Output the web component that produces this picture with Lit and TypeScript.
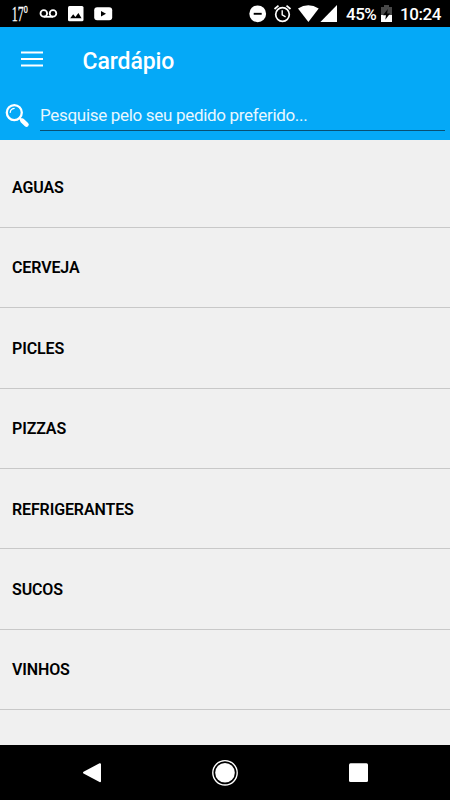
import { LitElement, html, css } from "lit";
import { customElement } from "lit/decorators.js";

@customElement("status-bar")
class StatusBar extends LitElement {
  static styles = css`
    :host { display: flex; box-sizing: border-box; height: 27px; background: #000; color: #fff; padding: 0 9px 0 12px; justify-content: space-between; font-family: Roboto, sans-serif; }
    .side { display: flex; align-items: flex-start; }
    svg { display: block; flex: none; overflow: visible; }
    .degrees { margin-right: 9px; }
    .mail { margin-right: 10px; }
    .photo { margin-right: 10px; }
    .dnd, .alarm { margin-right: 7px; }
    .wifi { margin-right: 1px; }
    .signal { margin-right: 9px; }
    .text { font-size: 17px; font-weight: 500; line-height: 20px; margin-top: 4px; white-space: nowrap; }
    .percent { width: 35px; letter-spacing: -0.5px; }
    .battery { margin-right: 8px; }
    .clock { width: 41px; letter-spacing: -0.4px; }
  `;
  render() {
    return html`
      <div class="side">
        <svg class="degrees" width="19" height="27" viewBox="12 0 19 27" fill="#fff" stroke="#fff" stroke-width="0.3" font-family="Liberation Serif, serif"><text transform="translate(11.8 21.4) scale(0.54 1)" font-size="22">17<tspan font-size="24" dy="1">º</tspan></text></svg>
        <svg class="mail" width="18" height="27" viewBox="40 0 18 27" fill="none" stroke="#fff" stroke-width="1.8"><circle cx="43.8" cy="13.4" r="3.3" /><circle cx="53" cy="13.4" r="3.3" /><path d="M43.8 16.8h9.2" /></svg>
        <svg class="photo" width="16" height="27" viewBox="68 0 16 27"><rect x="68" y="6" width="15.5" height="15.3" rx="1.5" fill="#fff" /><path d="M70.2 18.3l3-4 2.2 2.6 3-3.8 3.2 5.2z" fill="#000" /></svg>
        <svg width="19" height="27" viewBox="94 0 19 27"><rect x="94.2" y="7.2" width="18" height="13" rx="3" fill="#fff" /><path d="M101 10.9v5.6l5-2.8z" fill="#000" /></svg>
      </div>
      <div class="side">
        <svg class="dnd" width="18" height="27" viewBox="249 0 18 27"><circle cx="257.7" cy="13.8" r="8.4" fill="#fff" /><path d="M253.7 13.8h8" stroke="#000" stroke-width="1.9" /></svg>
        <svg class="alarm" width="17" height="27" viewBox="274 0 17 27" fill="none" stroke="#fff" stroke-width="1.7"><circle cx="282.5" cy="14.5" r="6.8" /><path d="M274.5 9l4-3.4M290.5 9l-4-3.4" /><path d="M282.2 10.3v4.6l3.4 2" stroke-width="1.4" /></svg>
        <svg class="wifi" width="21" height="27" viewBox="298 0 21 27"><path d="M298 8.6Q308.3 1.8 318.7 8.6L308.4 22z" fill="#fff" /></svg>
        <svg class="signal" width="17" height="27" viewBox="320 0 17 27"><path d="M320.4 22H337V5z" fill="#fff" /></svg>
        <span class="text percent">45%</span>
        <svg class="battery" width="11" height="27" viewBox="381 0 11 27"><path d="M381 7h3V5h5v2h3v8h-11z" fill="#484848" /><path d="M381 15h11v7h-11z" fill="#fff" /><path d="M387.8 9l-4.8 6.3h3l-.7 4.4 4.7-6.3h-2.9z" fill="#000" /></svg>
        <span class="text clock">10:24</span>
      </div>`;
  }
}

@customElement("menu-header")
class MenuHeader extends LitElement {
  static styles = css`
    :host { display: block; height: 113px; background: #05a9f7; color: #fff; font-family: Roboto, sans-serif; }
    .bar { display: flex; height: 67px; padding-left: 21px; }
    .menu { display: block; margin-top: 24px; }
    .title { margin: 20px 0 0 39.5px; font-size: 23px; line-height: 30px; font-weight: 500; letter-spacing: -0.1px; }
    .search { display: flex; padding: 0 5px 0 5px; }
    .lens { display: block; margin-top: 9px; }
    .field { flex: 1; height: 37px; box-sizing: border-box; margin-left: 10px; border-bottom: 1px solid #084f73; font-size: 17px; line-height: 22px; padding-top: 10px; color: #e8f7fe; white-space: nowrap; letter-spacing: -0.31px; }
  `;
  render() {
    return html`
      <div class="bar">
        <svg class="menu" width="22" height="16" viewBox="0 0 22 16" fill="none" stroke="#fff" stroke-width="2"><path d="M0 1.6h22M0 8h22M0 14.4h22" /></svg>
        <div class="title">Cardápio</div>
      </div>
      <div class="search">
        <svg class="lens" width="25" height="25" viewBox="5 103 25 25" fill="none" stroke="#fff"><circle cx="14.3" cy="112.6" r="7.5" stroke-width="2.3" /><path d="M10.2 112.5q.3-3.6 4-4.1" stroke-width="1.2" stroke-linecap="round" /><path d="M19.5 118l2.4 2.3" stroke-width="2.2" /><path d="M22.3 120.6l4.2 4.1" stroke-width="4.5" stroke-linecap="round" /></svg>
        <div class="field">Pesquise pelo seu pedido preferido...</div>
      </div>`;
  }
}

@customElement("category-list")
class CategoryList extends LitElement {
  static properties = { items: { attribute: false } };
  declare items: string[];
  static styles = css`
    :host { display: block; padding-top: 7.4px; background: #f0f0f0; font-family: Roboto, sans-serif; }
    .row { display: flex; align-items: center; box-sizing: border-box; height: 80.4px; padding: 0.8px 0 0 12px; border-bottom: 1px solid #c8c8c8; color: #000; font-size: 16px; font-weight: 600; letter-spacing: -0.12px; }
  `;
  render() {
    return this.items.map((item) => html`<div class="row">${item}</div>`);
  }
}

@customElement("navigation-bar")
class NavigationBar extends LitElement {
  static styles = css`
    :host { display: flex; height: 55px; background: #000; align-items: center; justify-content: space-between; padding: 0 78px; }
    svg { display: block; }
  `;
  render() {
    return html`
      <svg width="28" height="28" viewBox="78 759 28 28"><path d="M84 772.6L100 764.2V781.2z" fill="#fff" stroke="#fff" stroke-width="2" stroke-linejoin="round" /></svg>
      <svg width="28" height="28" viewBox="211 759 28 28"><circle cx="225" cy="772.8" r="12.2" fill="none" stroke="#fff" stroke-width="1.4" /><circle cx="225" cy="772.8" r="9.8" fill="#fff" /></svg>
      <svg width="28" height="28" viewBox="344 759 28 28"><rect x="349" y="763.2" width="19" height="18.8" rx="1.5" fill="#fff" /></svg>`;
  }
}

@customElement("app-root")
class AppRoot extends LitElement {
  static styles = css`
    :host { display: flex; flex-direction: column; height: 800px; overflow: hidden; background: #f0f0f0; }
    status-bar, menu-header, navigation-bar { flex: none; }
    category-list { flex: 1; }
  `;
  private categories = ["AGUAS", "CERVEJA", "PICLES", "PIZZAS", "REFRIGERANTES", "SUCOS", "VINHOS"];
  render() {
    return html`
      <status-bar></status-bar>
      <menu-header></menu-header>
      <category-list .items=${this.categories}></category-list>
      <navigation-bar></navigation-bar>`;
  }
}
